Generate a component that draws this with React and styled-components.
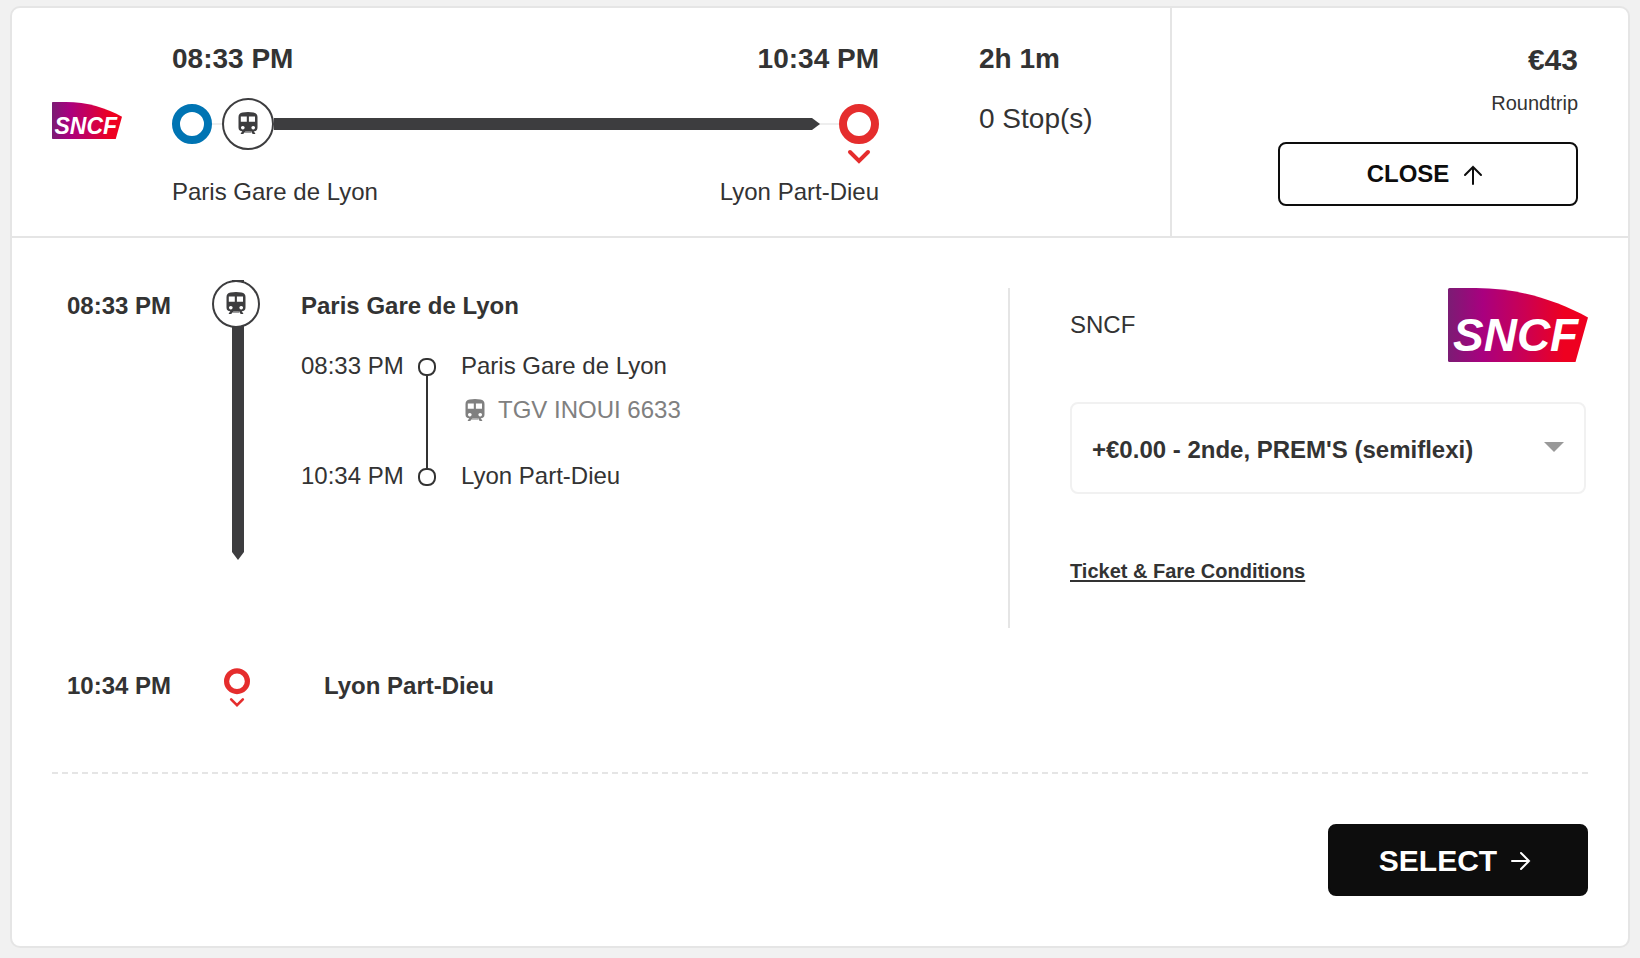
import React, { useId, useState } from 'react';
import styled, { createGlobalStyle } from 'styled-components';

const SncfLogo = ({ width }) => {
    const id = useId();
    return (
        <Logo width={width} viewBox="0 0 140 74" role="img" aria-label="SNCF logo">
            <defs>
                <linearGradient id={id} x1="0" x2="1" y1="0" y2="0">
                    <stop offset="0" stopColor="#7b1c74" />
                    <stop offset="0.25" stopColor="#a9007f" />
                    <stop offset="0.55" stopColor="#cb0053" />
                    <stop offset="0.83" stopColor="#ee0020" />
                    <stop offset="1" stopColor="#ee0020" />
                </linearGradient>
            </defs>
            <path d="M0 1.5Q0 0 1.5 0H28C70 0 108 12 140 29.500L127.500 74H1.500Q0 74 0 72.500Z" fill={`url(#${id})`} />
            <text x="5" y="63" fontSize="46">SNCF</text>
        </Logo>
    );
};

const TrainIcon = () => (
    <svg width="20" height="22" viewBox="0 0 20 22" fill="currentColor" aria-hidden="true">
        <path
            fillRule="evenodd"
            d="M4.500 .6Q10 -.4 15.500 .6Q19.500 1.400 19.500 5V15.500Q19.500 19.300 15.500 19.300H4.500Q.5 19.300 .5 15.500V5Q.5 1.400 4.500 .6Z
            M2.800 4.400V9.700H8.800V4.400Z M10.900 4.400V9.700H17V4.400Z
            M4.800 13.900a1.800 1.800 0 1 0 .01 0Z M15.200 13.900a1.800 1.800 0 1 0 .01 0Z"
        />
        <path d="M4.500 18.800H7.500L5.300 21.900H2.500Z M15.500 18.800H12.500L14.700 21.900H17.500Z M6 19.600H14V20.600H6Z" />
    </svg>
);

const EndMarker = ({ width }) => (
    <svg width={width} viewBox="0 0 40 61" fill="none" stroke="#e52d2d" aria-hidden="true">
        <circle cx="20" cy="20" r="16" strokeWidth="8" />
        <path d="M11 48L20 57L29 48" strokeWidth="4" strokeLinecap="round" />
    </svg>
);

const ArrowUp = () => (
    <svg width="24" height="24" viewBox="0 0 24 24" fill="none" stroke="currentColor" strokeWidth="2" aria-hidden="true">
        <path d="M12 22V5M4 13L12 5L20 13" strokeLinecap="round" />
    </svg>
);

const ArrowRight = () => (
    <svg width="24" height="24" viewBox="0 0 24 24" fill="none" stroke="currentColor" strokeWidth="2" aria-hidden="true">
        <path d="M3 12H20M12 4L20 12L12 20" strokeLinecap="round" />
    </svg>
);

const App = () => {
    const [open, setOpen] = useState(true);
    const [fare, setFare] = useState('semiflexi');

    return (
        <Page>
            <GlobalStyle />
            <Card>
                <Header>
                    <Trip>
                        <Carrier><SncfLogo width={70} /></Carrier>
                        <Journey>
                            <Ends>
                                <Time>08:33 PM</Time>
                                <Time>10:34 PM</Time>
                            </Ends>
                            <Track>
                                <StartRing />
                                <TrainBadge $size={52}><TrainIcon /></TrainBadge>
                                <TrackBar />
                                <Finish><EndMarker width={40} /></Finish>
                            </Track>
                            <Ends>
                                <Text>Paris Gare de Lyon</Text>
                                <Text>Lyon Part-Dieu</Text>
                            </Ends>
                        </Journey>
                        <Summary>
                            <Time>2h 1m</Time>
                            <Stops>0 Stop(s)</Stops>
                        </Summary>
                    </Trip>
                    <Offer>
                        <Price>€43</Price>
                        <Kind>Roundtrip</Kind>
                        <CloseButton type="button" onClick={() => setOpen(!open)}>
                            CLOSE <ArrowUp />
                        </CloseButton>
                    </Offer>
                </Header>
                {open && <Details>
                    <Main>
                        <Leg>
                            <LegTime $bold>08:33 PM</LegTime>
                            <Rail>
                                <TrainBadge $size={48}><TrainIcon /></TrainBadge>
                            </Rail>
                            <LegBody>
                                <Text $bold>Paris Gare de Lyon</Text>
                                <StopList>
                                    <Text>08:33 PM</Text>
                                    <Connector>
                                        <Dot />
                                        <Line />
                                        <Dot />
                                    </Connector>
                                    <Text>Paris Gare de Lyon</Text>
                                    <Service><TrainIcon />TGV INOUI 6633</Service>
                                    <LastTime>10:34 PM</LastTime>
                                    <Text>Lyon Part-Dieu</Text>
                                </StopList>
                            </LegBody>
                        </Leg>
                        <Fare>
                            <FareHead>
                                <Text as="label" htmlFor="fare">SNCF</Text>
                                <SncfLogo width={140} />
                            </FareHead>
                            <SelectBox>
                                <FareSelect id="fare" value={fare} onChange={(e) => setFare(e.target.value)}>
                                    <option value="semiflexi">+€0.00 - 2nde, PREM'S (semiflexi)</option>
                                </FareSelect>
                                <Caret />
                            </SelectBox>
                            <Conditions href="#conditions">Ticket &amp; Fare Conditions</Conditions>
                        </Fare>
                    </Main>
                    <Arrival>
                        <ArrivalTime $bold>10:34 PM</ArrivalTime>
                        <ArrivalMark><EndMarker width={26} /></ArrivalMark>
                        <Text $bold>Lyon Part-Dieu</Text>
                    </Arrival>
                    <Footer>
                        <SelectButton type="button">SELECT <ArrowRight /></SelectButton>
                    </Footer>
                </Details>}
            </Card>
        </Page>
    );
};

export default App;

const GlobalStyle = createGlobalStyle`
    * {
        box-sizing: border-box;
    }
    body {
        margin: 0;
        background: #f1f1f1;
        color: #333333;
        font-family: "Liberation Sans", Arial, sans-serif;
        font-size: 24px;
        line-height: 28px;
    }
    svg {
        display: block;
        flex-shrink: 0;
    }
`;

const Page = styled.main`
    padding: 6px 10px 10px;
`;

const Card = styled.article`
    background: #ffffff;
    border: 2px solid #e5e5e5;
    border-radius: 10px;
`;

const Header = styled.header`
    display: flex;
    border-bottom: 2px solid #e5e5e5;
`;

const Trip = styled.div`
    display: flex;
    flex: 1;
    min-width: 0;
    padding: 34px 0 30px 40px;
`;

const Carrier = styled.div`
    width: 120px;
    padding-top: 60px;
`;

const Logo = styled.svg`
    overflow: visible;
    text {
        font-family: "Liberation Sans", Arial, sans-serif;
        font-weight: bold;
        font-style: italic;
        fill: #ffffff;
    }
`;

const Journey = styled.div`
    flex: 1;
`;

const Ends = styled.div`
    display: flex;
    justify-content: space-between;
`;

const Time = styled.div`
    font-size: 28px;
    font-weight: bold;
    line-height: 34px;
`;

const Text = styled.div`
    font-weight: ${(props) => (props.$bold ? 'bold' : 'normal')};
    white-space: nowrap;
`;

const Track = styled.div`
    display: flex;
    align-items: center;
    margin: 22px 0 28px;
    background: linear-gradient(#eeeeee, #eeeeee) center / 100% 2px no-repeat;
`;

const StartRing = styled.div`
    width: 40px;
    height: 40px;
    margin-right: 10px;
    border: 8px solid #0074b3;
    border-radius: 50%;
    background: #ffffff;
`;

const TrainBadge = styled.div`
    display: flex;
    align-items: center;
    justify-content: center;
    position: relative;
    width: ${(props) => props.$size}px;
    height: ${(props) => props.$size}px;
    padding-bottom: 2px;
    border: 2px solid #3d3d3f;
    border-radius: 50%;
    background: #ffffff;
    color: #3d3d3f;
`;

const TrackBar = styled.div`
    flex: 1;
    height: 12px;
    margin-right: 19px;
    background: #3d3d3f;
    clip-path: polygon(0 0, calc(100% - 8px) 0, 100% 50%, calc(100% - 8px) 100%, 0 100%);
`;

/* the chevron hangs below the ring, outside the track */
const Finish = styled.div`
    height: 40px;
    background: radial-gradient(circle, #ffffff 16px, transparent 17px);
`;

const Summary = styled.div`
    width: 291px;
    padding-left: 100px;
`;

const Stops = styled.div`
    margin-top: 26px;
    font-size: 28px;
    line-height: 34px;
`;

const Offer = styled.div`
    display: flex;
    flex-direction: column;
    align-items: flex-end;
    width: 458px;
    padding: 34px 50px 30px;
    border-left: 2px solid #e5e5e5;
`;

const Price = styled.div`
    font-size: 30px;
    font-weight: bold;
    line-height: 36px;
`;

const Kind = styled.div`
    margin: 12px 0 26px;
    font-size: 20px;
    line-height: 26px;
`;

const Button = styled.button`
    display: flex;
    align-items: center;
    justify-content: center;
    gap: 12px;
    padding: 0 10px 0 6px;
    border: 2px solid #0d0d0d;
    border-radius: 8px;
    font-family: inherit;
    font-weight: bold;
    cursor: pointer;
`;

const CloseButton = styled(Button)`
    width: 300px;
    height: 64px;
    background: #ffffff;
    color: #0d0d0d;
    font-size: 24px;
`;

const SelectButton = styled(Button)`
    width: 260px;
    height: 72px;
    padding-top: 2px;
    background: #0d0d0d;
    color: #ffffff;
    font-size: 30px;
`;

const Details = styled.section`
    padding: 0 40px 50px;
`;

const Main = styled.div`
    display: flex;
    justify-content: space-between;
`;

const Leg = styled.div`
    display: flex;
    align-self: flex-start;
    padding: 42px 0 0 15px;
`;

const LegTime = styled(Text)`
    width: 145px;
    padding-top: 12px;
`;

const Rail = styled.div`
    position: relative;
    width: 89px;
    &::before {
        content: '';
        position: absolute;
        top: 0;
        bottom: 0;
        left: 20px;
        width: 12px;
        background: #3d3d3f;
        clip-path: polygon(0 0, 100% 0, 100% calc(100% - 8px), 50% 100%, 0 calc(100% - 8px));
    }
`;

const LegBody = styled.div`
    padding: 12px 0 70px;
`;

const StopList = styled.div`
    display: grid;
    grid-template-columns: 117px 43px auto;
    grid-template-rows: 28px 50px 28px;
    row-gap: 16px;
    margin-top: 32px;
`;

const Connector = styled.div`
    grid-row: 1 / 4;
    grid-column: 2;
    display: flex;
    flex-direction: column;
    align-items: center;
    width: 18px;
    padding: 6px 0 4px;
`;

const Dot = styled.span`
    width: 18px;
    height: 18px;
    border: 2px solid #333333;
    border-radius: 8px;
`;

const Line = styled.span`
    flex: 1;
    width: 2px;
    background: #333333;
`;

const Service = styled.div`
    grid-column: 3;
    display: flex;
    align-items: center;
    gap: 13px;
    height: 28px;
    padding-left: 4px;
    color: #808080;
`;

const LastTime = styled(Text)`
    grid-column: 1;
`;

const Fare = styled.div`
    width: 580px;
    margin-top: 50px;
    padding: 0 0 45px 60px;
    border-left: 2px solid #e5e5e5;
`;

const FareHead = styled.div`
    display: flex;
    align-items: center;
    justify-content: space-between;
`;

const SelectBox = styled.div`
    display: grid;
    align-items: center;
    margin: 40px 2px 65px 0;
`;

const FareSelect = styled.select`
    grid-area: 1 / 1;
    width: 100%;
    height: 92px;
    padding: 2px 60px 0 20px;
    appearance: none;
    border: 2px solid #f1f1f1;
    border-radius: 8px;
    background: #ffffff;
    color: #333333;
    font-family: inherit;
    font-size: 24px;
    font-weight: bold;
`;

const Caret = styled.span`
    grid-area: 1 / 1;
    justify-self: end;
    margin: 0 22px 2px 0;
    border-top: 10px solid #999999;
    border-left: 10px solid transparent;
    border-right: 10px solid transparent;
    pointer-events: none;
`;

const Conditions = styled.a`
    display: block;
    width: fit-content;
    color: #333333;
    font-size: 20px;
    font-weight: bold;
    line-height: 24px;
    text-decoration: underline 2px;
    text-underline-offset: 2px;
    text-decoration-skip-ink: none;
`;

const Arrival = styled.div`
    display: flex;
    align-items: flex-start;
    padding: 40px 0 64px 15px;
    line-height: 36px;
`;

const ArrivalTime = styled(Text)`
    width: 145px;
`;

const ArrivalMark = styled.div`
    display: flex;
    justify-content: center;
    width: 50px;
    height: 40px;
    margin-right: 62px;
`;

const Footer = styled.footer`
    display: flex;
    justify-content: flex-end;
    padding-top: 50px;
    border-top: 2px dashed #e5e5e5;
`;
